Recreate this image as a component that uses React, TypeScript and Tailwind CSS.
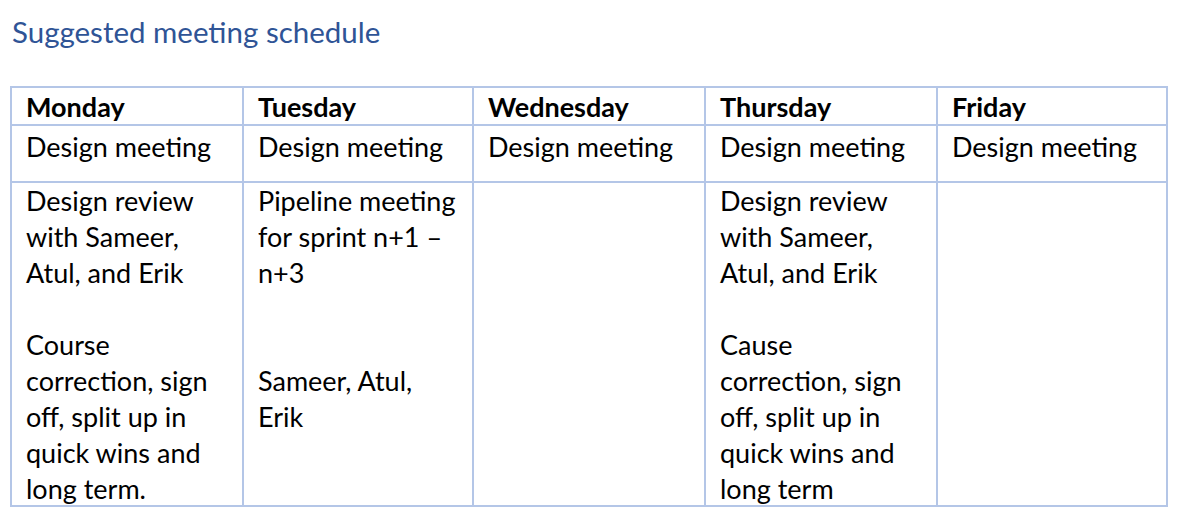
const days = ["Monday", "Tuesday", "Wednesday", "Thursday", "Friday"];

const details: string[][] = [
  [
    "Design review",
    "with Sameer,",
    "Atul, and Erik",
    "",
    "Course",
    "correction, sign",
    "off, split up in",
    "quick wins and",
    "long term.",
  ],
  ["Pipeline meeting", "for sprint n+1 \u2013", "n+3", "", "", "Sameer, Atul,", "Erik"],
  [],
  [
    "Design review",
    "with Sameer,",
    "Atul, and Erik",
    "",
    "Cause",
    "correction, sign",
    "off, split up in",
    "quick wins and",
    "long term",
  ],
  [],
];

const font = { fontFamily: "Lato, 'Noto Sans', sans-serif" };

export default function App() {
  return (
    <div className="h-[516px] w-[1182px] overflow-hidden bg-white text-black" style={font}>
      <h1 className="pl-[12px] pt-[14px] text-[29.5px] leading-[36px] font-normal text-[#2f5496]">
        Suggested meeting schedule
      </h1>

      <div className="ml-[10px] mt-[36px] grid w-[1158px] grid-cols-[230px_228px_230px_230px_228px] gap-[2px] bg-[#b4c6e7] p-[2px]">
        {days.map((day) => (
          <div key={day} className="h-[36px] bg-white pl-[14px] pt-[1px] text-[27px] leading-[36px] font-bold">
            {day}
          </div>
        ))}

        {days.map((day) => (
          <div key={`${day}-meeting`} className="h-[55px] bg-white pl-[14px] pt-[3px] text-[27px] leading-[36px]">
            Design meeting
          </div>
        ))}

        {details.map((lines, i) => (
          <div key={`detail-${i}`} className="h-[322px] overflow-hidden bg-white pl-[14px] text-[27px] leading-[36px]">
            {lines.map((line, j) => (
              <div key={j} className="h-[36px] whitespace-nowrap">
                {line}
              </div>
            ))}
          </div>
        ))}
      </div>
    </div>
  );
}
